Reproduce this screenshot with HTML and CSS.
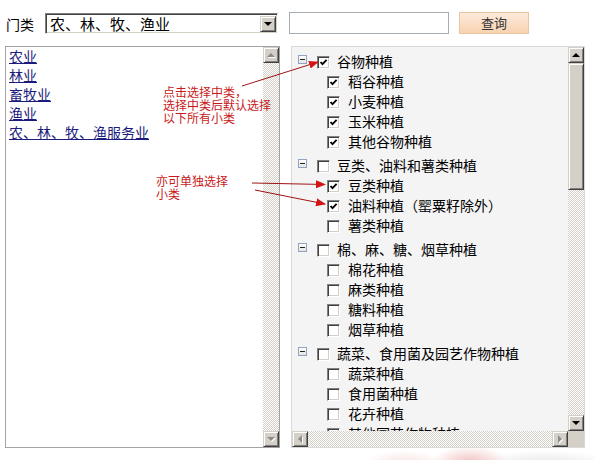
FILE: index.html
```html
<!DOCTYPE html>
<html lang="zh-CN">
<head>
<meta charset="utf-8">
<title>门类选择</title>
<link rel="stylesheet" href="styles.css">
</head>
<body>
<div class="page">
  <div class="toolbar">
    <span class="label">门类</span>
    <div class="select">
      <span class="select-text">农、林、牧、渔业</span>
      <span class="sb-btn select-btn"><i class="tri tri-down"></i></span>
    </div>
    <div class="textbox"></div>
    <div class="btn">查询</div>
  </div>

  <div class="main">
    <div class="panel panel-left">
      <div class="list">
        <a href="#">农业</a>
        <a href="#">林业</a>
        <a href="#">畜牧业</a>
        <a href="#">渔业</a>
        <a href="#">农、林、牧、渔服务业</a>
      </div>
      <div class="vscroll">
        <span class="sb-btn"><i class="tri tri-up dis"></i></span>
        <span class="track"></span>
        <span class="sb-btn"><i class="tri tri-down dis"></i></span>
      </div>
    </div>

    <div class="panel panel-right">
      <div class="viewport">
        <div class="group">
          <div class="row grow"><span class="tog"></span><span class="cb on"><svg viewBox="0 0 9 9"><polyline points="1.5,4 3.5,6.2 7.6,1.8"/></svg></span><span class="txt">谷物种植</span></div>
          <div class="row crow"><span class="cb on"><svg viewBox="0 0 9 9"><polyline points="1.5,4 3.5,6.2 7.6,1.8"/></svg></span><span class="txt">稻谷种植</span></div>
          <div class="row crow"><span class="cb on"><svg viewBox="0 0 9 9"><polyline points="1.5,4 3.5,6.2 7.6,1.8"/></svg></span><span class="txt">小麦种植</span></div>
          <div class="row crow"><span class="cb on"><svg viewBox="0 0 9 9"><polyline points="1.5,4 3.5,6.2 7.6,1.8"/></svg></span><span class="txt">玉米种植</span></div>
          <div class="row crow"><span class="cb on"><svg viewBox="0 0 9 9"><polyline points="1.5,4 3.5,6.2 7.6,1.8"/></svg></span><span class="txt">其他谷物种植</span></div>
        </div>
        <div class="group">
          <div class="row grow"><span class="tog"></span><span class="cb"></span><span class="txt">豆类、油料和薯类种植</span></div>
          <div class="row crow"><span class="cb on"><svg viewBox="0 0 9 9"><polyline points="1.5,4 3.5,6.2 7.6,1.8"/></svg></span><span class="txt">豆类种植</span></div>
          <div class="row crow"><span class="cb on"><svg viewBox="0 0 9 9"><polyline points="1.5,4 3.5,6.2 7.6,1.8"/></svg></span><span class="txt">油料种植（罂粟籽除外）</span></div>
          <div class="row crow"><span class="cb"></span><span class="txt">薯类种植</span></div>
        </div>
        <div class="group">
          <div class="row grow"><span class="tog"></span><span class="cb"></span><span class="txt">棉、麻、糖、烟草种植</span></div>
          <div class="row crow"><span class="cb"></span><span class="txt">棉花种植</span></div>
          <div class="row crow"><span class="cb"></span><span class="txt">麻类种植</span></div>
          <div class="row crow"><span class="cb"></span><span class="txt">糖料种植</span></div>
          <div class="row crow"><span class="cb"></span><span class="txt">烟草种植</span></div>
        </div>
        <div class="group">
          <div class="row grow"><span class="tog"></span><span class="cb"></span><span class="txt">蔬菜、食用菌及园艺作物种植</span></div>
          <div class="row crow"><span class="cb"></span><span class="txt">蔬菜种植</span></div>
          <div class="row crow"><span class="cb"></span><span class="txt">食用菌种植</span></div>
          <div class="row crow"><span class="cb"></span><span class="txt">花卉种植</span></div>
          <div class="row crow"><span class="cb"></span><span class="txt">其他园艺作物种植</span></div>
        </div>
      </div>
      <div class="vscroll">
        <span class="sb-btn"><i class="tri tri-up"></i></span>
        <span class="sb-thumb"></span>
        <span class="track"></span>
        <span class="sb-btn"><i class="tri tri-down"></i></span>
      </div>
      <div class="hscroll">
        <span class="sb-btn"><i class="tri tri-left dis"></i></span>
        <span class="track"></span>
        <span class="sb-btn"><i class="tri tri-right dis"></i></span>
      </div>
      <div class="corner"></div>
    </div>
  </div>

  <div class="note note1">点击选择中类，<br>选择中类后默认选择<br>以下所有小类</div>
  <div class="note note2">亦可单独选择<br>小类</div>

  <svg class="arrows" width="595" height="460" viewBox="0 0 595 460">
    <defs>
      <marker id="ah" markerUnits="userSpaceOnUse" markerWidth="10" markerHeight="8" refX="9" refY="4" orient="auto">
        <path d="M0,0 L10,4 L0,8 z" fill="#d41414"/>
      </marker>
    </defs>
    <line x1="242" y1="86" x2="318" y2="62" marker-end="url(#ah)"/>
    <line x1="252" y1="183" x2="325" y2="184.5" marker-end="url(#ah)"/>
    <line x1="255" y1="190" x2="325" y2="204" marker-end="url(#ah)"/>
  </svg>
</div>
</body>
</html>
```

FILE: styles.css
```css
* { box-sizing: border-box; }

body {
  margin: 0;
  background: #fff;
  font-family: "Noto Sans CJK SC", "Noto Sans", sans-serif;
  font-size: 14px;
  color: #000;
}

.page {
  position: relative;
  width: 595px;
  height: 460px;
  overflow: hidden;
  background:
    radial-gradient(ellipse 38px 16px at 470px 462px, rgba(226, 120, 120, 0.45), rgba(226, 120, 120, 0) 100%),
    radial-gradient(ellipse 40px 14px at 405px 464px, rgba(236, 170, 170, 0.35), rgba(236, 170, 170, 0) 100%),
    radial-gradient(ellipse 70px 14px at 545px 464px, rgba(200, 200, 205, 0.45), rgba(200, 200, 205, 0) 100%),
    #fff;
}

/* ---------- toolbar ---------- */
.toolbar {
  display: flex;
  align-items: flex-start;
  padding: 12px 0 0 6px;
  height: 34px;
}

.label {
  width: 28px;
  margin: 5px 11px 0 0;
  font-size: 14px;
  line-height: 14px;
}

.select {
  width: 233px;
  height: 21px;
  margin-top: 1px;
  display: flex;
  align-items: center;
  justify-content: space-between;
  padding: 1px 1px 1px 3px;
  background: #fff;
  border: 1px solid;
  border-color: #808080 #fff #fff #808080;
  box-shadow: inset 1px 1px #404040, inset -1px -1px #d4d0c8;
}

.select-text {
  font-size: 15px;
  line-height: 17px;
  padding-left: 1px;
  white-space: nowrap;
}

.select-btn {
  width: 16px;
  height: 17px;
}

.textbox {
  width: 160px;
  height: 22px;
  margin-left: 11px;
  background: #fff;
  border: 1px solid #a5acb2;
}

.btn {
  width: 70px;
  height: 22px;
  margin-left: 10px;
  border: 1px solid #e8c6a2;
  background: linear-gradient(#fdeadb, #f8d2b1);
  color: #333;
  font-size: 13px;
  line-height: 20px;
  text-align: center;
}

/* ---------- main panels ---------- */
.main {
  display: flex;
  gap: 11px;
  margin-top: 12px;
  padding-left: 5px;
}

.panel {
  height: 402px;
  display: grid;
  overflow: hidden;
}

.panel-left {
  width: 275px;
  border: 1px solid #a3a3a3;
  background: #fff;
  grid-template-columns: 1fr 16px;
}

.panel-right {
  width: 294px;
  border: 1px solid #d9d9d9;
  background: #f4f4f4;
  grid-template-columns: 1fr 16px;
  grid-template-rows: 1fr 16px;
}

.list {
  padding-left: 3px;
}

.list a {
  display: block;
  width: max-content;
  color: #1b1b7e;
  text-decoration: underline;
  font-size: 14px;
  line-height: 19px;
}

/* ---------- tree ---------- */
.viewport {
  overflow: hidden;
  min-width: 0;
}

.group {
  padding-top: 4px;
}

.row {
  display: flex;
  align-items: center;
  height: 20px;
  white-space: nowrap;
  font-size: 14px;
  line-height: 20px;
}

.grow { padding-left: 6px; }
.crow { padding-left: 35px; }

.tog {
  width: 9px;
  height: 9px;
  margin: -4px 10px 0 0;
  border: 1px solid #90a4bf;
  background: linear-gradient(#ffffff, #e4e4e4);
  display: flex;
  align-items: center;
  justify-content: center;
}

.tog::before {
  content: "";
  width: 5px;
  height: 1px;
  background: #222;
}

.cb {
  width: 13px;
  height: 13px;
  margin: 3px 8px 0 0;
  flex: none;
  background: #fff;
  border: 1px solid;
  border-color: #808080 #fff #fff #808080;
  box-shadow: inset 1px 1px #404040, inset -1px -1px #d4d0c8;
  display: flex;
  align-items: center;
  justify-content: center;
}

.grow .cb { margin-right: 7px; }

.cb svg {
  width: 9px;
  height: 9px;
  fill: none;
  stroke: #000;
  stroke-width: 1.8;
}

/* ---------- classic scrollbars ---------- */
.vscroll {
  display: flex;
  flex-direction: column;
}

.hscroll {
  display: flex;
}

.sb-btn {
  flex: none;
  width: 16px;
  height: 16px;
  display: flex;
  align-items: center;
  justify-content: center;
  background: #d4d0c8;
  border: 1px solid;
  border-color: #d4d0c8 #404040 #404040 #d4d0c8;
  box-shadow: inset 1px 1px #fff, inset -1px -1px #808080;
}

.sb-thumb {
  flex: none;
  height: 127px;
  background: #d4d0c8;
  border: 1px solid;
  border-color: #d4d0c8 #404040 #404040 #d4d0c8;
  box-shadow: inset 1px 1px #fff, inset -1px -1px #808080;
}

.track {
  flex: 1;
  background: repeating-conic-gradient(#d4d0c8 0 25%, #fff 0 50%) 0 0 / 2px 2px;
}

.corner {
  background: #d4d0c8;
}

.tri {
  display: block;
  width: 0;
  height: 0;
}

.tri-up {
  border-left: 4px solid transparent;
  border-right: 4px solid transparent;
  border-bottom: 4px solid #000;
}

.tri-down {
  border-left: 4px solid transparent;
  border-right: 4px solid transparent;
  border-top: 4px solid #000;
}

.tri-left {
  border-top: 4px solid transparent;
  border-bottom: 4px solid transparent;
  border-right: 4px solid #000;
}

.tri-right {
  border-top: 4px solid transparent;
  border-bottom: 4px solid transparent;
  border-left: 4px solid #000;
}

.tri-up.dis { border-bottom-color: #8a8a8a; filter: drop-shadow(1px 1px 0 #fff); }
.tri-down.dis { border-top-color: #8a8a8a; filter: drop-shadow(1px 1px 0 #fff); }
.tri-left.dis { border-right-color: #8a8a8a; filter: drop-shadow(1px 1px 0 #fff); }
.tri-right.dis { border-left-color: #8a8a8a; filter: drop-shadow(1px 1px 0 #fff); }

/* ---------- annotations ---------- */
.note {
  position: absolute;
  color: #c81a1a;
  font-size: 12px;
  line-height: 13px;
  white-space: nowrap;
}

.note1 { left: 163px; top: 85px; }
.note2 { left: 156px; top: 174px; }

.arrows {
  position: absolute;
  left: 0;
  top: 0;
  pointer-events: none;
}

.arrows line {
  stroke: #a01414;
  stroke-width: 1;
}
```
